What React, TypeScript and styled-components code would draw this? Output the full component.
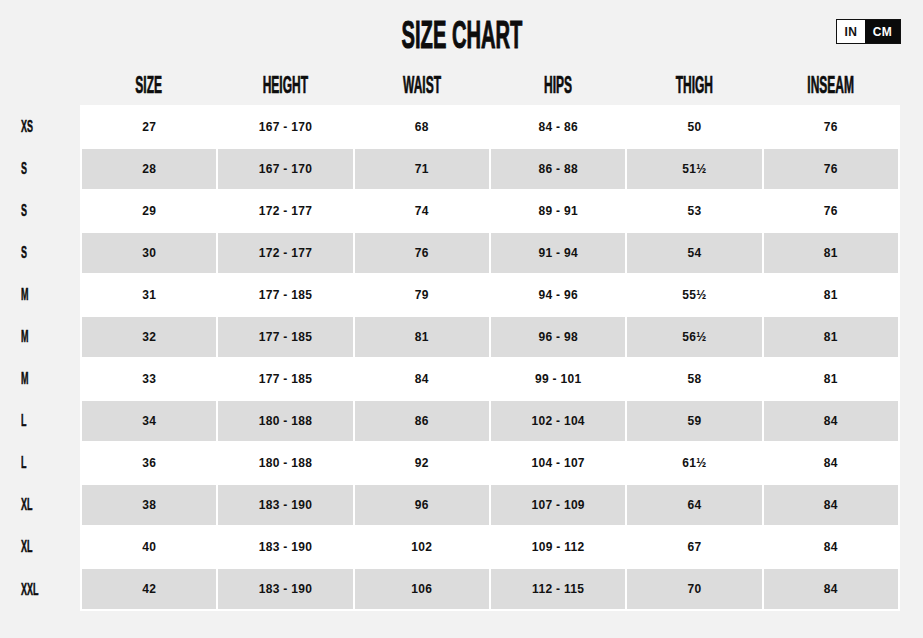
import React from "react";
import styled, { createGlobalStyle } from "styled-components";

const Global = createGlobalStyle`
  html, body { margin: 0; padding: 0; background: #f2f2f2; }
  body { font-family: "Liberation Sans", Arial, sans-serif; color: #111; }
`;

const Page = styled.div`
  width: 923px;
  height: 638px;
  background: #f2f2f2;
  overflow: hidden;
`;

const TitleBar = styled.div`
  display: grid;
  grid-template-columns: 1fr auto 1fr;
  align-items: start;
  height: 62px;
`;

const Condensed = styled.span<{ $scale: number; $origin?: string; $stroke?: number }>`
  display: inline-block;
  transform: scaleX(${(p) => p.$scale});
  transform-origin: ${(p) => p.$origin || "center"};
  white-space: nowrap;
  -webkit-text-stroke: ${(p) => p.$stroke || 0}px currentColor;
`;

const Title = styled.h1`
  grid-column: 2;
  margin: 0;
  padding-top: 16px;
  font-family: "Liberation Sans", Arial, sans-serif;
  font-weight: 700;
  font-size: 38px;
  line-height: 38px;
  color: #0d0d0d;
  text-align: center;
  width: 121px;
  display: flex;
  justify-content: center;
`;

const Toggle = styled.div`
  grid-column: 3;
  justify-self: end;
  margin: 19px 22px 0 0;
  display: flex;
  height: 25px;
  border: 1px solid #111;
  box-sizing: border-box;
`;

const ToggleBtn = styled.div<{ $active?: boolean }>`
  display: flex;
  align-items: center;
  justify-content: center;
  width: ${(p) => (p.$active ? "35px" : "28px")};
  background: ${(p) => (p.$active ? "#0a0a0a" : "#fff")};
  color: ${(p) => (p.$active ? "#fff" : "#111")};
  font-size: 12px;
  font-weight: 700;
  letter-spacing: 0.4px;
`;

const HeaderRow = styled.div`
  display: flex;
  height: 43px;
`;

const Spacer = styled.div`
  width: 80px;
  flex: none;
`;

const HeaderCells = styled.div`
  width: 820px;
  display: grid;
  grid-template-columns: repeat(6, 1fr);
  column-gap: 2px;
  padding: 0 2px;
  box-sizing: border-box;
`;

const HeaderCell = styled.div`
  display: flex;
  justify-content: center;
  align-items: center;
  padding-top: 2px;
  font-weight: 700;
  font-size: 24px;
  color: #0d0d0d;
`;

const Row = styled.div`
  display: flex;
  &:last-child > div:last-child {
    padding-bottom: 2px;
  }
`;

const Label = styled.div`
  width: 80px;
  flex: none;
  box-sizing: border-box;
  padding: 2px 0 0 21px;
  display: flex;
  align-items: center;
  font-weight: 700;
  font-size: 16px;
  color: #0d0d0d;
`;

const Cells = styled.div`
  width: 820px;
  box-sizing: border-box;
  display: grid;
  grid-template-columns: repeat(6, 1fr);
  column-gap: 2px;
  padding: 2px 2px 0;
  background: #fff;
`;

const Cell = styled.div<{ $shade: boolean }>`
  height: 40px;
  display: flex;
  align-items: center;
  justify-content: center;
  background: ${(p) => (p.$shade ? "#dcdcdc" : "#fff")};
  font-size: 12px;
  font-weight: 700;
  color: #111;
  letter-spacing: 0.3px;
`;

const headers = ["SIZE", "HEIGHT", "WAIST", "HIPS", "THIGH", "INSEAM"];

const rows: [string, string[]][] = [
  ["XS", ["27", "167 - 170", "68", "84 - 86", "50", "76"]],
  ["S", ["28", "167 - 170", "71", "86 - 88", "51½", "76"]],
  ["S", ["29", "172 - 177", "74", "89 - 91", "53", "76"]],
  ["S", ["30", "172 - 177", "76", "91 - 94", "54", "81"]],
  ["M", ["31", "177 - 185", "79", "94 - 96", "55½", "81"]],
  ["M", ["32", "177 - 185", "81", "96 - 98", "56½", "81"]],
  ["M", ["33", "177 - 185", "84", "99 - 101", "58", "81"]],
  ["L", ["34", "180 - 188", "86", "102 - 104", "59", "84"]],
  ["L", ["36", "180 - 188", "92", "104 - 107", "61½", "84"]],
  ["XL", ["38", "183 - 190", "96", "107 - 109", "64", "84"]],
  ["XL", ["40", "183 - 190", "102", "109 - 112", "67", "84"]],
  ["XXL", ["42", "183 - 190", "106", "112 - 115", "70", "84"]],
];

export default function App() {
  return (
    <Page>
      <Global />
      <TitleBar>
        <Title>
          <Condensed $scale={0.53} $stroke={1}>SIZE CHART</Condensed>
        </Title>
        <Toggle>
          <ToggleBtn>IN</ToggleBtn>
          <ToggleBtn $active>CM</ToggleBtn>
        </Toggle>
      </TitleBar>
      <HeaderRow>
        <Spacer />
        <HeaderCells>
          {headers.map((h) => (
            <HeaderCell key={h}>
              <Condensed $scale={0.5} $stroke={0.7}>{h}</Condensed>
            </HeaderCell>
          ))}
        </HeaderCells>
      </HeaderRow>
      {rows.map(([label, vals], i) => (
        <Row key={i}>
          <Label>
            <Condensed $scale={0.56} $origin="left" $stroke={0.5}>
              {label}
            </Condensed>
          </Label>
          <Cells>
            {vals.map((v, j) => (
              <Cell key={j} $shade={i % 2 === 1}>
                {v}
              </Cell>
            ))}
          </Cells>
        </Row>
      ))}
    </Page>
  );
}
